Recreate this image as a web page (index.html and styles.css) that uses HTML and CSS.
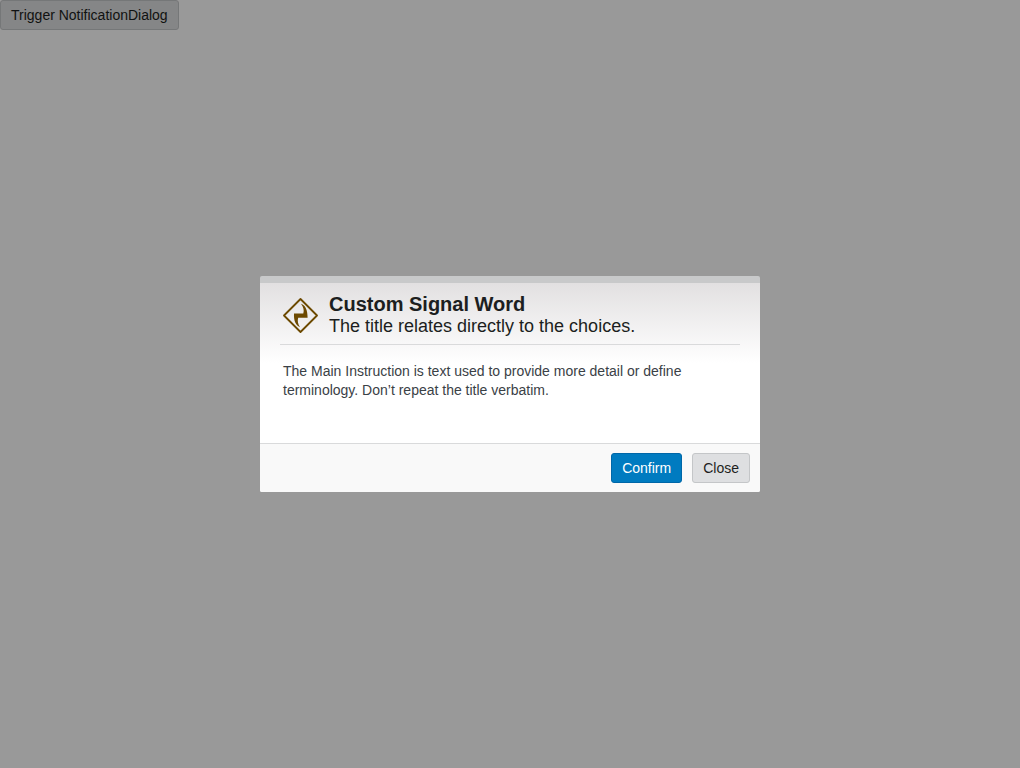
FILE: index.html
```html
<!DOCTYPE html>
<html lang="en">
<head>
<meta charset="utf-8">
<title>Notification dialog</title>
<link rel="stylesheet" href="styles.css">
</head>
<body>
<button class="button" type="button">Trigger NotificationDialog</button>
<div class="overlay">
  <section class="dialog" role="dialog" aria-modal="true" aria-labelledby="dialog-title" aria-describedby="dialog-text">
    <div class="content">
      <header class="header">
        <svg class="icon" viewBox="0 0 35 35" aria-hidden="true">
          <path d="M17.5 1 34 17.5 17.5 34 1 17.5Z" fill="none" stroke="#6c4900" stroke-width="1.8" stroke-linejoin="round"/>
          <path d="M18 5.800C22.500 7.500 24.600 12 24.600 19.800H15.200C14.300 22.500 14.800 26 17 29.200C12.500 27 10.600 22.500 11 15.400H20.300C21.300 12.500 20.500 9 18 5.800Z" fill="#6c4900"/>
        </svg>
        <div class="heading" id="dialog-title">
          <h1 class="signal">Custom Signal Word</h1>
          <p class="title">The title relates directly to the choices.</p>
        </div>
      </header>
      <p class="body" id="dialog-text">The Main Instruction is text used to provide more detail or define terminology. Don’t repeat the title verbatim.</p>
    </div>
    <footer class="footer">
      <button class="button primary" type="button">Confirm</button>
      <button class="button" type="button">Close</button>
    </footer>
  </section>
</div>
</body>
</html>
```

FILE: styles.css
```css
* { box-sizing: border-box; }

body {
  margin: 0;
  background: #fff;
  color: #1c1e20;
  font: 14px/20px "Liberation Sans", Arial, sans-serif;
}

.button {
  height: 30px;
  padding: 0 10px;
  border: 1px solid #c4c6c8;
  border-radius: 3px;
  background: #dedfe1;
  color: #1c1e20;
  font: inherit;
}

.button.primary {
  border-color: #0067a8;
  background: #007bc0;
  color: #fff;
}

.overlay {
  position: fixed;
  inset: 0;
  display: flex;
  align-items: center;
  justify-content: center;
  background: rgba(0, 0, 0, 0.4);
}

.dialog {
  width: 100%;
  max-width: 500px;
  overflow: hidden;
  border-top: 7px solid #c8c9ca;
  border-radius: 2px;
  background: #fff;
}

.content {
  padding: 0 20px 43px;
  background: linear-gradient(#e2e0e1, #fff 80px);
}

.header {
  display: flex;
  align-items: center;
  gap: 11px;
  padding: 10px 3px 7px;
  border-bottom: 1px solid #d9dadb;
}

.icon {
  width: 35px;
  height: 35px;
}

.signal,
.title {
  margin: 0;
  line-height: 22px;
}

.signal { font-size: 20px; }
.title { font-size: 18px; }

.body {
  margin: 0;
  padding: 17px 3px 0;
  color: #3a4146;
  line-height: 19px;
}

.footer {
  display: flex;
  justify-content: flex-end;
  gap: 10px;
  padding: 9px 10px;
  border-top: 1px solid #d9dadb;
  background: #f9f9f9;
}
```
